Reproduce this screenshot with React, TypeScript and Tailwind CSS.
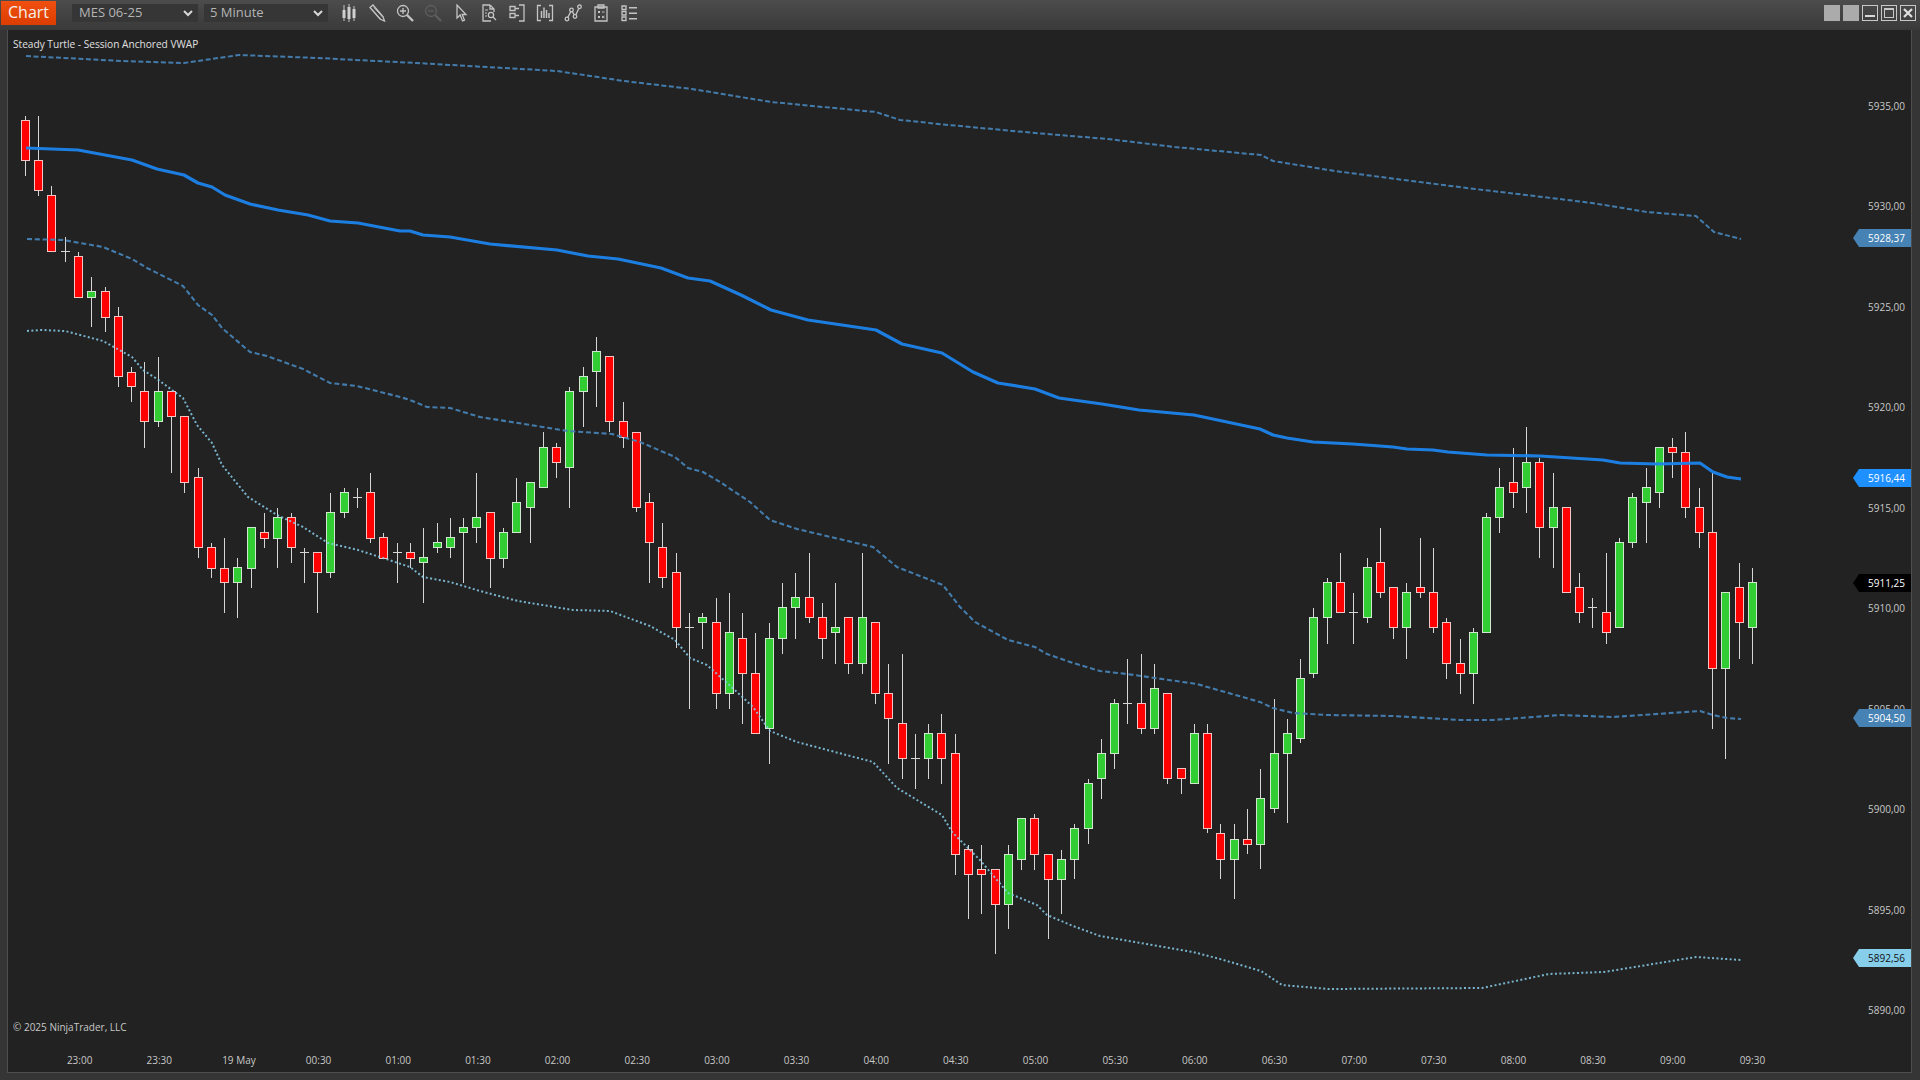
import React from "react";

// [wickTop, wickBottom, bodyTop, bodyBottom, green?1:0]
const C: number[][] = [
[116,176,120,160,0],[116,196,160,190,0],[186,251,195,251,0],[237,262,251,251,0],[252,297,256,297,0],[277,327,291,297,1],[287,332,291,317,0],[307,387,316,376,0],
[367,402,372,386,0],[362,448,391,421,0],[357,427,391,421,1],[391,473,391,416,0],[416,493,416,482,0],[468,558,477,547,0],[543,578,547,568,0],[538,613,568,582,0],
[558,618,567,582,1],[527,588,527,568,1],[513,548,532,538,0],[508,568,517,538,1],[513,563,517,547,0],[548,583,552,552,0],[552,613,552,572,0],[493,578,512,572,1],
[488,518,492,512,1],[488,508,497,497,0],[473,543,492,538,0],[533,558,537,558,0],[543,583,552,552,0],[543,568,552,558,0],[528,603,557,562,1],[523,553,542,547,1],
[518,558,537,547,1],[518,583,527,532,1],[473,543,517,527,1],[512,588,512,558,0],[528,568,532,558,1],[478,532,502,532,1],[482,543,482,507,1],[432,487,447,487,1],
[443,478,447,462,0],[387,508,391,467,1],[367,427,376,391,1],[337,407,351,371,1],[356,432,356,421,0],[402,448,421,437,0],[432,512,432,507,0],[493,583,502,542,0],
[523,588,547,577,0],[553,648,572,627,0],[613,709,627,627,0],[613,649,617,622,1],[598,709,622,693,0],[593,709,632,693,1],[613,724,638,673,0],[633,733,673,733,0],
[623,764,638,728,1],[583,654,607,638,1],[573,639,597,607,1],[553,623,597,617,0],[603,659,617,638,0],[583,664,627,632,1],[617,674,617,663,0],[553,674,617,663,1],
[622,704,622,693,0],[664,764,693,718,0],[654,779,723,758,0],[734,789,758,758,0],[724,779,733,758,1],[714,784,733,758,0],[734,875,753,854,0],[845,919,849,874,0],
[845,914,869,874,0],[869,954,869,904,0],[845,929,854,904,1],[818,870,818,859,1],[814,870,818,854,0],[854,939,854,879,0],[850,914,859,879,1],[824,879,828,859,1],
[779,844,783,828,1],[739,799,753,778,1],[699,769,703,753,1],[659,724,703,703,0],[654,734,703,728,0],[664,734,688,728,1],[693,784,693,778,0],[768,794,768,778,0],
[724,783,733,783,1],[724,833,733,828,0],[824,879,833,859,0],[824,899,839,859,1],[809,854,839,844,0],[769,869,798,844,1],[699,813,753,808,1],[719,823,733,753,1],
[659,743,678,738,1],[608,678,617,673,1],[578,644,582,617,1],[553,612,582,612,0],[593,644,612,612,0],[558,623,567,617,1],[528,598,562,592,0],[587,639,587,627,0],
[583,659,592,627,1],[538,598,587,592,0],[548,633,592,627,0],[618,679,622,663,0],[639,694,663,673,0],[628,704,632,673,1],[513,632,517,632,1],[468,533,487,517,1],
[448,508,482,492,0],[427,513,462,487,1],[458,558,462,527,0],[473,568,507,527,1],[507,592,507,592,0],[573,623,587,612,0],[598,628,607,607,0],[553,644,612,632,0],
[538,627,542,627,1],[493,548,497,542,1],[468,543,487,502,1],[447,508,447,492,1],[438,478,447,452,0],[432,518,452,507,0],[488,548,507,532,0],[473,729,532,668,0],
[592,759,592,668,1],[563,659,587,622,0],[568,664,582,627,1],
];

const P = (a: number[]) => {
  let s = "";
  for (let i = 0; i < a.length; i += 2) s += `${a[i]},${a[i + 1]} `;
  return s;
};

const MAIN = P([26,148,78,150,132,160,157,169,184,175,198,183,212,187,225,195,250,204,278,210,308,215,330,221,358,223,400,231,410,231,423,235,450,237,490,244,557,250,588,256,618,259,661,268,688,278,710,281,741,295,771,310,808,320,876,330,902,344,942,353,973,372,998,383,1035,389,1059,398,1102,404,1139,410,1194,415,1260,429,1273,435,1287,438,1313,442,1353,444,1393,447,1407,449,1433,450,1448,452,1487,455,1540,456,1603,460,1620,463,1657,464,1700,463,1713,472,1727,477,1741,479]);
const UPPER = P([26,56,122,61,184,63,239,55,318,58,416,63,557,71,624,81,692,89,771,102,876,112,900,120,949,125,1035,133,1108,139,1175,147,1261,155,1273,161,1335,171,1396,179,1475,189,1543,197,1592,203,1647,212,1696,216,1714,232,1741,239]);
const LOWER1 = P([27,239,63,240,103,247,132,259,147,268,183,286,198,305,212,315,222,328,250,352,267,356,303,369,330,383,357,386,400,397,410,400,427,407,450,408,480,417,568,431,612,434,640,442,675,457,688,468,703,472,720,482,750,502,770,520,797,529,873,547,897,567,943,585,960,607,975,622,1008,640,1035,647,1047,654,1073,663,1100,671,1127,674,1197,684,1260,702,1273,708,1293,713,1327,715,1393,716,1460,720,1493,720,1560,715,1613,717,1700,711,1713,715,1727,718,1741,719]);
const LOWER2 = P([27,331,42,330,65,331,103,341,132,357,143,370,157,379,183,398,197,425,212,443,222,465,248,497,277,515,303,527,328,543,358,550,383,558,410,567,423,577,450,582,480,591,518,601,573,610,610,611,650,626,675,640,690,658,707,665,737,692,753,707,770,731,797,742,873,762,897,788,942,815,952,832,980,860,1008,893,1037,905,1047,915,1073,926,1100,936,1193,952,1220,959,1261,971,1282,985,1329,989,1482,988,1549,974,1604,972,1696,957,1741,960]);

const PRICES = ["5935,00","5930,00","5925,00","5920,00","5915,00","5910,00","5905,00","5900,00","5895,00","5890,00"];
const TIMES = ["23:00","23:30","19 May","00:30","01:00","01:30","02:00","02:30","03:00","03:30","04:00","04:30","05:00","05:30","06:00","06:30","07:00","07:30","08:00","08:30","09:00","09:30"];
const TAGS = [
  { t: "5928,37", c: "top-[199px] bg-[#4682b4] text-white" },
  { t: "5916,44", c: "top-[439px] bg-[#1e90ff] text-white" },
  { t: "5911,25", c: "top-[544px] bg-black text-white" },
  { t: "5904,50", c: "top-[679px] bg-[#4682b4] text-white" },
  { t: "5892,56", c: "top-[919px] bg-[#87ceeb] text-[#111111]" },
];

const S = { fill: "none", stroke: "#c4c4c4", strokeWidth: 1.3 } as const;
const Box = ({ children }: { children: React.ReactNode }) => (
  <svg width="18" height="18" viewBox="0 0 18 18" className="shrink-0">{children}</svg>
);
const Icons = [
  <Box key="a"><path d="M4 1v16M9 0v18M14 2v15" stroke="#c4c4c4" strokeWidth="1" /><rect x="2.5" y="6" width="3" height="8" fill="#d0d0d0" /><rect x="7.5" y="3" width="3" height="12" fill="#d0d0d0" /><rect x="12.5" y="5" width="3" height="9" fill="#d0d0d0" /></Box>,
  <Box key="b"><path d="M2 3.5 5 1l10 11.5 1.5 4.5-4.5-2Z" {...S} /><path d="M4 5.5l9 10M6 3.5l9 10" stroke="#c4c4c4" strokeWidth="1" /></Box>,
  <Box key="c"><circle cx="7" cy="7" r="5.5" {...S} /><path d="M7 4v6M4 7h6" {...S} /><path d="m11 11 6 6" stroke="#c4c4c4" strokeWidth="2.4" /></Box>,
  <Box key="d"><circle cx="7" cy="7" r="5.5" fill="none" stroke="#5e5e5e" strokeWidth="1.3" /><path d="M4 7h6" stroke="#5e5e5e" strokeWidth="1.3" /><path d="m11 11 6 6" stroke="#5e5e5e" strokeWidth="2.4" /></Box>,
  <Box key="e"><path d="M5 1v13l3.2-3 2.3 6 2-.8-2.3-5.7H14Z" {...S} /></Box>,
  <Box key="f"><path d="M10 1H3v16h8M10 1l4 4v3M10 1v4h4" {...S} /><path d="M5 6h3M5 9h2M5 12h2" stroke="#c4c4c4" strokeWidth="1" /><circle cx="11" cy="11" r="2.6" {...S} /><path d="m13 13 3 3" {...S} /></Box>,
  <Box key="g"><path d="M2 2.5h5v4H2ZM2 9.5h5v4H2ZM7 4.5h4M7 11.5h4" {...S} /><path d="M11 1h5v16h-5" {...S} /></Box>,
  <Box key="h"><path d="M5 1.5H1.5v15H5M13 1.5h3.5v15H13" {...S} /><path d="M5.5 14V7M8 14V3.5M10.5 14V6M13 14V9" stroke="#c4c4c4" strokeWidth="1.5" /></Box>,
  <Box key="i"><circle cx="3" cy="15" r="1.8" {...S} /><circle cx="7.5" cy="6" r="1.8" {...S} /><circle cx="11" cy="12.5" r="1.8" {...S} /><circle cx="15.5" cy="2.8" r="1.8" {...S} /><path d="M3.8 13.4 6.8 7.6M8.3 7.6l2 3.3M11.8 10.9l3-6.4" {...S} /></Box>,
  <Box key="j"><path d="M3 3h12v14H3Z" {...S} /><path d="M6 1h6v3H6Z" {...S} /><path d="M6 7l2 2M8 7 6 9M10 8h2.5M6 12l2 2M8 12l-2 2M10 12l2.5 2M12.5 12 10 14" stroke="#c4c4c4" strokeWidth="1" /></Box>,
  <Box key="k"><path d="M2 2h4v3.5H2ZM2 7.5h4V11H2ZM2 13h4v3.5H2Z" {...S} /><path d="M9 3.7h8M9 9.2h8M9 14.7h8" stroke="#c4c4c4" strokeWidth="1.5" /></Box>,
];

const Chevron = () => (
  <svg width="10" height="7" viewBox="0 0 10 7"><path d="M1 1l4 4 4-4" fill="none" stroke="#d8d8d8" strokeWidth="2" /></svg>
);

const Drop = ({ label, w, pl }: { label: string; w: string; pl: string }) => (
  <div className={`${w} ${pl} h-[18px] bg-[#363636] flex items-center justify-between pr-[5px] text-[13px] leading-none text-[#b4b4b4]`}>
    <span className="pb-[1px]">{label}</span>
    <Chevron />
  </div>
);

export default function App() {
  return (
    <div className="w-[1920px] h-[1080px] overflow-hidden bg-[#353535] flex flex-col font-['Open_Sans',sans-serif]">
      <div className="h-[30px] shrink-0 bg-gradient-to-b from-[#4c4c4c] to-[#3a3a3a] flex items-start pt-[1px]">
        <div className="w-[55px] h-[24px] ml-[1px] bg-gradient-to-b from-[#f04f10] to-[#dc3d00] text-[#f4f0ec] text-[16px] leading-[23px] text-center">Chart</div>
        <div className="flex items-center h-[24px] ml-[16px] gap-[6px]">
          <Drop label="MES 06-25" w="w-[126px]" pl="pl-[7px]" />
          <Drop label="5 Minute" w="w-[124px]" pl="pl-[6px]" />
        </div>
        <div className="flex items-center h-[24px] ml-[12px] gap-[10px]">{Icons}</div>
        <div className="flex items-center h-[24px] ml-auto mr-[4px] gap-[3px]">
          <div className="w-[16px] h-[16px] bg-[#ababab]" />
          <div className="w-[16px] h-[16px] bg-[#ababab]" />
          <div className="w-[16px] h-[16px] border border-[#c8c8c8] flex items-end justify-center pb-[3px]"><div className="w-[10px] h-[2px] bg-[#d8d8d8]" /></div>
          <div className="w-[16px] h-[16px] border border-[#c8c8c8] flex items-center justify-center"><div className="w-[10px] h-[10px] border border-t-2 border-[#c8c8c8]" /></div>
          <div className="w-[16px] h-[16px] border border-[#c8c8c8] flex items-center justify-center">
            <svg width="10" height="10" viewBox="0 0 10 10"><path d="M1 1l8 8M9 1l-8 8" stroke="#e0e0e0" strokeWidth="2.2" /></svg>
          </div>
        </div>
      </div>

      <div className="flex-1 min-h-0 ml-[7px] mr-[8px] mb-[7px] border-x border-b border-[#4e4e4e] bg-[#222222] flex flex-col text-[10px] text-[#c8c8c8]">
        <div className="flex-1 min-h-0 flex">
          <div className="flex-1 relative">
            <svg width="1832" height="1018" viewBox="8 30 1832 1018" className="block">
              <g shapeRendering="crispEdges">
                {C.map((c, i) => {
                  const x = Math.floor(25.3 + 13.285 * i);
                  const [wt, wb, bt, bb, g] = c;
                  return (
                    <g key={i}>
                      <rect x={x} y={wt} width="1" height={wb - wt} fill="#d6d6d6" />
                      {bt === bb ? (
                        <rect x={x - 4} y={bt} width="9" height="1" fill="#d6d6d6" />
                      ) : (
                        <rect x={x - 3.5} y={bt + 0.5} width="8" height={bb - bt} fill={g ? "#32cd32" : "#ff0000"} stroke={g ? "#cfe6cf" : "#f2c4c4"} strokeWidth="1" />
                      )}
                    </g>
                  );
                })}
              </g>
              <polyline points={UPPER} fill="none" stroke="#4682b4" strokeWidth="2" strokeDasharray="5 2.5" opacity="0.95" />
              <polyline points={LOWER1} fill="none" stroke="#4682b4" strokeWidth="2.1" strokeDasharray="5 2.8" opacity="0.95" />
              <polyline points={LOWER2} fill="none" stroke="#87ceeb" strokeWidth="2" strokeDasharray="2 2.4" opacity="0.85" />
              <polyline points={MAIN} fill="none" stroke="#1e84ec" strokeWidth="3.2" strokeLinejoin="round" opacity="0.95" />
            </svg>
            <div className="absolute left-[5px] top-[7px] leading-[14px] text-[10.15px] text-[#e0e0e0]">Steady Turtle - Session Anchored VWAP</div>
            <div className="absolute left-[5px] top-[990px] leading-[14px]">© 2025 NinjaTrader, LLC</div>
          </div>
          <div className="w-[71px] shrink-0 relative pt-[69px]">
            {PRICES.map((p) => (
              <div key={p} className="h-[100.44px] pr-[6px] text-right leading-[14px]">{p}</div>
            ))}
            {TAGS.map((t) => (
              <div key={t.t} className={`absolute left-[13px] right-0 h-[18px] pr-[6px] text-right leading-[18px] [clip-path:polygon(6px_0,100%_0,100%_100%,6px_100%,0_50%)] ${t.c}`}>{t.t}</div>
            ))}
          </div>
        </div>
        <div className="h-[24px] shrink-0 flex items-center pl-[31.8px]">
          {TIMES.map((t) => (
            <div key={t} className="w-[79.67px] shrink-0 text-center">{t}</div>
          ))}
        </div>
      </div>
    </div>
  );
}
